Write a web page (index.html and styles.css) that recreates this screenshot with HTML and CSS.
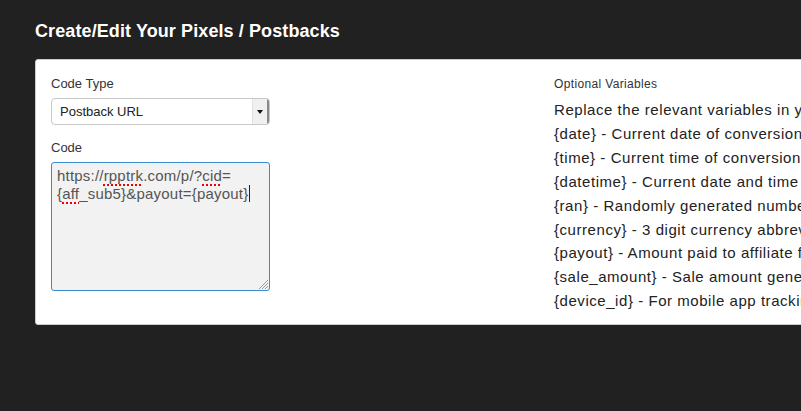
FILE: index.html
```html
<!DOCTYPE html>
<html lang="en">
<head>
    <meta charset="UTF-8">
    <title>Create/Edit Your Pixels / Postbacks</title>
    <link rel="stylesheet" href="styles.css">
</head>
<body>
    <div class="page">
        <h1>Create/Edit Your Pixels / Postbacks</h1>

        <div class="panel">
            <div class="form-col">
                <label class="field-label">Code Type</label>
                <div class="select">
                    <span class="select-value">Postback URL</span>
                    <span class="select-arrow"></span>
                </div>

                <label class="field-label code-label">Code</label>
                <div class="code-box">
                    https://<span class="misspelled">rpptrk</span>.com/p/?<span class="misspelled">cid</span>=<br>{<span class="misspelled">aff</span>_sub5}&amp;payout={payout}<span class="caret"></span>
                    <svg class="grip" width="10" height="10" viewBox="0 0 10 10">
                        <path d="M1 10 L10 1 M4 10 L10 4 M7 10 L10 7" stroke="#999" stroke-width="1"/>
                    </svg>
                </div>
            </div>

            <div class="vars-col">
                <div class="vars-title">Optional Variables</div>
                <div class="vars-list">
                    <div>Replace the relevant variables in your code with the values below</div>
                    <div>{date} - Current date of conversion</div>
                    <div>{time} - Current time of conversion</div>
                    <div>{datetime} - Current date and time of conversion</div>
                    <div>{ran} - Randomly generated number</div>
                    <div>{currency} - 3 digit currency abbreviation</div>
                    <div>{payout} - Amount paid to affiliate for conversion</div>
                    <div>{sale_amount} - Sale amount generated</div>
                    <div>{device_id} - For mobile app tracking</div>
                </div>
            </div>
        </div>
    </div>
</body>
</html>
```

FILE: styles.css
```css
body {
    margin: 0;
    background-color: #212121;
    font-family: 'Liberation Sans', Arial, sans-serif;
    color: #333;
    overflow: hidden;
}

.page {
    padding: 20px 0 0 35px;
}

h1 {
    margin: 0 0 17px;
    color: #fff;
    font-size: 18px;
    font-weight: bold;
    line-height: 22px;
    letter-spacing: 0.1px;
}

.panel {
    width: 820px;
    height: 266px;
    box-sizing: border-box;
    background-color: #fff;
    border: 1px solid #ccc;
    border-radius: 3px;
    padding: 15px;
    display: grid;
    grid-template-columns: 503px 1fr;
}

.form-col {
    width: 219px;
    display: flex;
    flex-direction: column;
}

.field-label {
    display: block;
    font-size: 13px;
    line-height: 18px;
    color: #333;
    margin-bottom: 5px;
}

.code-label {
    margin-top: 14px;
}

.select {
    height: 27px;
    box-sizing: border-box;
    border: 1px solid #c8c8c8;
    border-radius: 4px;
    display: flex;
    align-items: center;
    justify-content: space-between;
    padding-left: 8px;
    font-size: 13px;
    color: #222;
    overflow: hidden;
}

.select-arrow {
    width: 14px;
    height: 100%;
    background-color: #f0f0f0;
    border-left: 1px solid #e2e2e2;
    border-right: 2px solid #8a8a8a;
    position: relative;
}

.select-arrow::after {
    content: "";
    position: absolute;
    left: 4px;
    top: 11px;
    border-left: 3px solid transparent;
    border-right: 3px solid transparent;
    border-top: 4px solid #111;
}

.code-box {
    position: relative;
    height: 129px;
    box-sizing: border-box;
    background-color: #f2f2f2;
    border: 1px solid #3a8ad0;
    border-radius: 3px;
    padding: 4px 5px;
    font-size: 15px;
    letter-spacing: 0.2px;
    line-height: 18px;
    color: #555;
}

.misspelled {
    text-decoration: underline dotted #e00;
    text-decoration-thickness: 2px;
    text-underline-offset: 3px;
}

.caret {
    display: inline-block;
    width: 1px;
    height: 17px;
    margin-left: 1px;
    vertical-align: -3px;
    background-color: #222;
}

.grip {
    position: absolute;
    right: 1px;
    bottom: 1px;
}

.vars-col {
    white-space: nowrap;
}

.vars-title {
    font-size: 12px;
    letter-spacing: 0.35px;
    line-height: 18px;
    color: #333;
    margin-bottom: 5px;
}

.vars-list {
    font-size: 15px;
    letter-spacing: 0.55px;
    line-height: 23.9px;
    color: #222;
}
```
